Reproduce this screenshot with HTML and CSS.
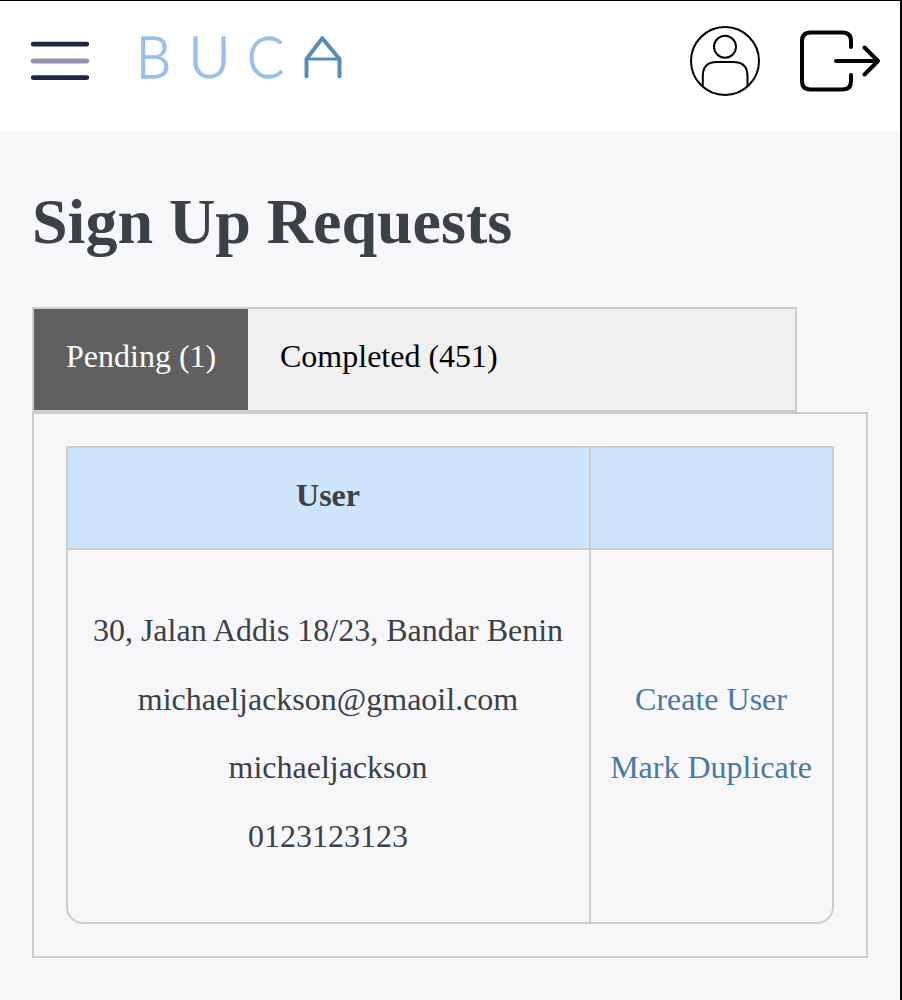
FILE: index.html
```html
<!DOCTYPE html>
<html lang="en">
<head>
<meta charset="utf-8">
<title>Sign Up Requests</title>
<link rel="stylesheet" href="styles.css">
</head>
<body>
<div class="app">
  <header class="topbar">
    <svg class="menu" width="60" height="42" viewBox="0 0 60 42" fill="none" stroke-width="4.800" stroke-linecap="round">
      <path d="M3.200 4.200H56.800M3.200 37.600H56.800" stroke="#20264a"/>
      <path d="M3.200 21H56.800" stroke="#9292aa"/>
    </svg>
    <svg class="logo" width="210" height="50" viewBox="0 0 210 50">
      <g class="logo-text">
        <text x="-4" y="45" textLength="35" lengthAdjust="spacingAndGlyphs">B</text>
        <text x="48.500" y="45" textLength="42" lengthAdjust="spacingAndGlyphs">U</text>
        <text x="107" y="45" textLength="37" lengthAdjust="spacingAndGlyphs">C</text>
      </g>
      <g fill="none" stroke="#568dbb" stroke-width="4" stroke-linecap="round" stroke-linejoin="round">
        <path d="M166.500 26L182.300 5.200L199.500 26M166.500 26V43.200M199.500 26V43.200"/>
        <path d="M166.500 26H199.500" stroke-width="3"/>
      </g>
    </svg>
    <svg class="profile" width="70" height="70" viewBox="0 0 70 70" fill="none" stroke="#000" stroke-width="2">
      <circle cx="35" cy="35" r="34"/>
      <circle cx="35" cy="20.700" r="11"/>
      <path d="M12.800 60V50Q12.800 36 27 36H43Q57.500 36 57.500 50V60"/>
    </svg>
    <svg class="logout" width="80" height="62" viewBox="0 0 80 62" fill="none" stroke="#000" stroke-width="4" stroke-linecap="round" stroke-linejoin="round">
      <path d="M51 17V11Q51 2.500 42.500 2.500H10.500Q2 2.500 2 11V51Q2 59.500 10.500 59.500H42.500Q51 59.500 51 51V45M36 31H78M64.500 17.500L78 31L64.500 44.500"/>
    </svg>
  </header>
  <main class="content">
    <h1 class="title">Sign Up Requests</h1>
    <nav class="tabs">
      <button class="tab tab-active">Pending (1)</button>
      <button class="tab">Completed (451)</button>
    </nav>
    <section class="panel">
      <div class="table">
        <div class="cell head">User</div>
        <div class="cell head"></div>
        <div class="cell">
          <p>30, Jalan Addis 18/23, Bandar Benin</p>
          <p>michaeljackson@gmaoil.com</p>
          <p>michaeljackson</p>
          <p>0123123123</p>
        </div>
        <div class="cell">
          <a class="action">Create User</a>
          <a class="action">Mark Duplicate</a>
        </div>
      </div>
    </section>
  </main>
</div>
</body>
</html>
```
FILE: styles.css
```css
* { box-sizing: border-box; }
body { margin: 0; background: #000; font: 32px "Liberation Serif", "Times New Roman", serif; color: #3a4147; }
.app { height: 1000px; margin-right: 2px; border-top: 1px solid #000; background: #f7f7fa; }
.topbar { display: flex; align-items: center; height: 130px; padding: 0 20px 10px 30px; background: #fff; }
.logo { margin: 0 auto 6px 50px; overflow: visible; }
.logo-text { font: 300 57px Lato, sans-serif; fill: #98c0ee; stroke: #98c0ee; stroke-width: 1.3px; stroke-linejoin: round; }
.profile { margin-right: 40px; overflow: visible; }
.content { padding: 54px 32px 0; }
.title { margin: 0 0 48px; font-size: 64px; line-height: 74px; }
.tabs { display: flex; width: 765px; height: 105px; border: 2px solid #ccc; background: #f0f0f0; }
.tab { padding: 0 32px 6px; border: 0; background: none; font: inherit; color: #000; white-space: nowrap; }
.tab-active { width: 214px; background: #606060; color: #fff; }
.panel { height: 546px; padding: 32px; border: 2px solid #ccc; }
.table { display: grid; grid-template: 100px 372px / 521px 241px; gap: 2px; width: 768px; height: 478px; padding: 0; border: 2px solid #cdcdd0; border-radius: 0 0 17px 17px; background: #cdcdd0; overflow: hidden; }
.table { grid-template-columns: 521px 1fr; }
.cell { display: flex; flex-direction: column; align-items: center; justify-content: center; padding: 0 1px 6px 0; background: #f7f7fa; line-height: 68.5px; white-space: nowrap; }
.head { background: #cde4fd; font-weight: bold; }
.cell p { margin: 0; }
.action { color: #4779a4; }
```
